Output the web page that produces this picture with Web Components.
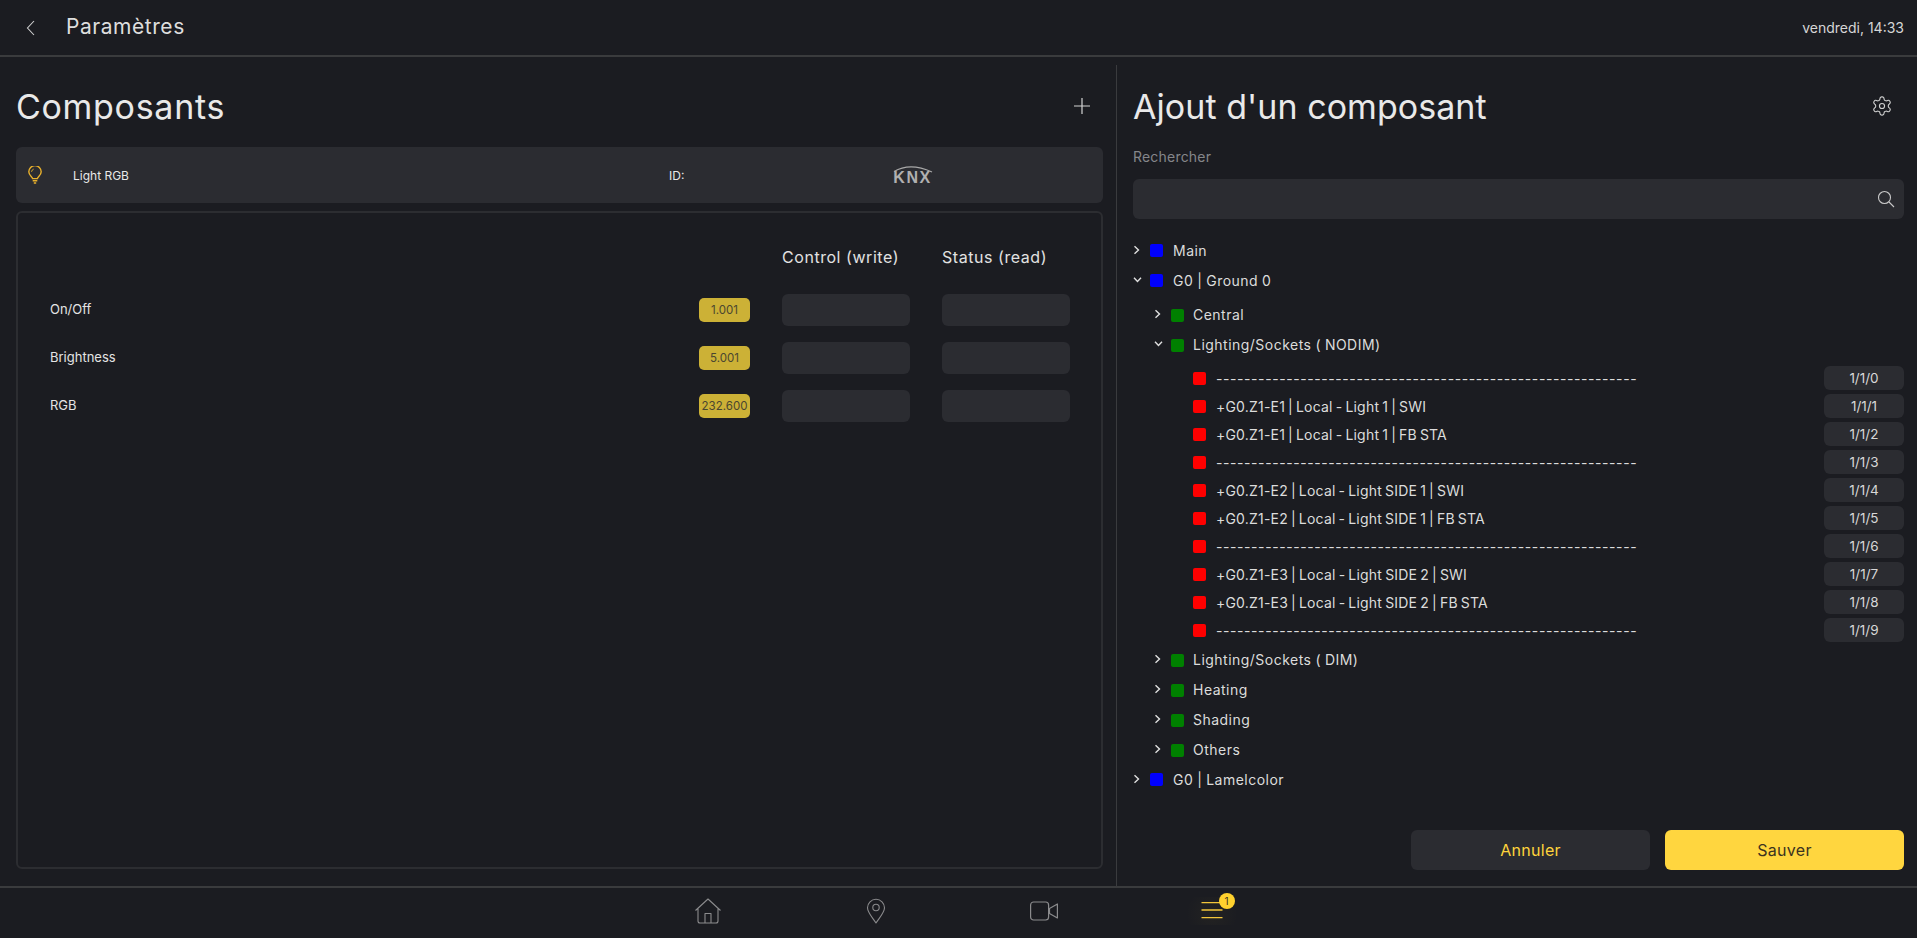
<!doctype html>
<html lang="fr"><head><meta charset="utf-8"><title>Paramètres</title>
<style>
html,body{margin:0;height:100%;background:#1b1c21;}
body{font-family:Inter,"Noto Sans",sans-serif;color:#e6e6e6;overflow:hidden}
</style></head><body>
<app-shell>
  <app-header slot="header" title="Paramètres" time="vendredi, 14:33"></app-header>
  <components-panel slot="left"></components-panel>
  <add-panel slot="right"></add-panel>
  <bottom-nav slot="nav"></bottom-nav>
</app-shell>
<script>
const FONT='Inter,"Noto Sans",sans-serif';
function def(name,html,init){
  customElements.define(name,class extends HTMLElement{
    connectedCallback(){
      if(this.shadowRoot)return;
      const r=this.attachShadow({mode:'open'});
      r.innerHTML=typeof html==='function'?html(this):html;
      if(init)init.call(this,r);
    }
  });
}
const esc=s=>String(s||'').replace(/&/g,'&amp;').replace(/</g,'&lt;');
def('app-shell',`<style>
:host{display:grid;grid-template-rows:57px 1fr 52px;grid-template-columns:1116px 1fr;width:1917px;height:938px;background:#1b1c21;overflow:hidden}
.h{grid-column:1/3}.n{grid-column:1/3}
.r{border-left:1px solid #3a3b3e;margin-top:8px;min-height:0;display:flex}
::slotted(*){min-width:0}
</style>
<div class="h"><slot name="header"></slot></div>
<div class="l"><slot name="left"></slot></div>
<div class="r"><slot name="right"></slot></div>
<div class="n"><slot name="nav"></slot></div>`);
def('app-header',el=>`<style>
:host{display:flex;align-items:center;height:55px;border-bottom:2px solid #3a3b3d;color:#dcdcdc;font-family:${FONT}}
svg{margin-left:26px;width:10px;height:16px;flex:none}
.t{margin-left:30px;font-size:21px;letter-spacing:.55px;line-height:53px;height:55px;color:#dedede}
.d{margin-left:auto;margin-right:13px;font-size:14px;color:#d6d6d6}
</style><svg viewBox="0 0 10 16" fill="none" stroke="#cfcfcf" stroke-width="1.100"><path d="M8 1 1.500 8 8 15"/></svg><span class="t">${esc(el.getAttribute('title'))}</span><span class="d">${esc(el.getAttribute('time'))}</span>`);
def('panel-title',`<style>
:host{display:flex;align-items:center;justify-content:space-between;height:36px;font-family:${FONT};font-size:34px;color:#e9e9e9;font-weight:400}
</style><slot></slot><slot name="action"></slot>`);
def('component-row',`<style>
:host{display:flex;align-items:center;height:56px;border-radius:6px;background:#2b2c31;font-family:${FONT};font-size:12px;color:#e8e8e8}
.ic{width:14px;height:18px;margin-left:12px;flex:none}
.n{margin-left:31px;width:596px;flex:none}
.id{width:223px;flex:none}
.k{display:block;width:41px;position:relative;height:20px;color:#b0b0b0}
.k svg{position:absolute;top:0;left:0;width:41px;height:10px}
.k b{position:absolute;top:4.500px;left:0;width:41px;text-align:center;font:900 16px/15px "Liberation Sans",sans-serif;letter-spacing:1.500px}
</style>
<svg class="ic" viewBox="0 0 14 18" fill="none" stroke="#e8b02c" stroke-width="1.400"><path d="M4.600 12.600c-.2-1.800-3.800-3.100-3.800-6.800a6.200 6.200 0 0 1 12.400 0c0 3.700-3.600 5-3.800 6.800z"/><path d="M4.700 14.800h4.600M5.800 17h2.400"/><path d="M3.500 5.800a3.400 3.400 0 0 1 2.200-2.700" stroke-width=".9"/></svg>
<span class="n">Light RGB</span><span class="id">ID:</span>
<span class="k"><svg viewBox="0 0 41 10" fill="none"><path d="M2 6.500Q18-3 40 7" stroke="#a8a8a8" stroke-width="1.300"/></svg><b>KNX</b></span>`);
def('dpt-row',el=>`<style>
:host{display:grid;grid-template-columns:649px 51px 32px 128px 32px 128px;align-items:center;height:32px;margin-bottom:16px;font-family:${FONT};font-size:13px;color:#e4e4e4}
.lb{padding-bottom:3px}
.c{height:24px;border-radius:5px;background:#ccb136;color:#4a4630;font-size:11.500px;line-height:24px;text-align:center;white-space:nowrap}
.f{height:32px;border-radius:6px;background:#2b2c31}
</style><span class="lb">${esc(el.getAttribute('label'))}</span><span class="c">${esc(el.getAttribute('dpt'))}</span><span></span><span class="f"></span><span></span><span class="f"></span>`);
def('components-panel',`<style>
:host{display:block;padding:0 13px 0 16px;height:100%;box-sizing:border-box;font-family:${FONT}}
panel-title{margin-top:31px;letter-spacing:.7px}
.plus{width:16px;height:16px;margin-right:13px;display:block}
component-row{margin-top:23px}
.box{margin-top:8px;height:658px;box-sizing:border-box;border:2px solid #2c2d31;border-radius:6px;padding:0 0 0 32px}
.head{display:grid;grid-template-columns:732px 160px 1fr;height:34px;margin-top:27px;margin-bottom:20px;font-size:16px;letter-spacing:.55px;line-height:34px;color:#e2e2e2}
</style>
<panel-title>Composants<svg slot="action" class="plus" viewBox="0 0 16 16" stroke="#d4d4d4" stroke-width="1.200"><path d="M8 0v16M0 8h16"/></svg></panel-title>
<component-row></component-row>
<div class="box">
 <div class="head"><span></span><span>Control (write)</span><span>Status (read)</span></div>
 <dpt-row label="On/Off" dpt="1.001"></dpt-row>
 <dpt-row label="Brightness" dpt="5.001"></dpt-row>
 <dpt-row label="RGB" dpt="232.600"></dpt-row>
</div>`);
def('tree-node',el=>{
  const lvl=+el.getAttribute('level')||0, col=['#0000ff','#008000','#ff0000'][lvl];
  const a=el.getAttribute('arrow'), label=el.getAttribute('label')||'';
  const arrow=a==='r'?'<path d="M1.500 1.200 5.500 5 1.500 8.800"/>':a==='d'?'<path d="M1 2.800 4.500 6.500 8 2.800"/>':'';
  const addr=el.getAttribute('addr');
  const spacing=label[0]==='-'?'letter-spacing:.58px':lvl==2?'letter-spacing:.2px;word-spacing:-1.100px':'letter-spacing:.48px;word-spacing:-.5px';
  return `<style>
:host{display:flex;align-items:center;height:${lvl==2?28:30}px;padding-left:${[0,21,43][lvl]}px;font-family:${FONT};font-size:14px;color:#dcdcdc;white-space:nowrap}
svg{width:17px;height:10px;flex:none}
i{width:13px;height:13px;border-radius:2px;background:${col};flex:none;margin-right:${lvl==1?9:10}px;margin-top:${lvl==1?2:1}px}
.l{${spacing}}
.a{margin-left:auto;width:80px;height:24px;border-radius:6px;background:#2b2c31;text-align:center;line-height:24px;font-size:13.500px;color:#d8d8d8}
</style><svg viewBox="0 0 17 10" fill="none" stroke="#e0e0e0" stroke-width="1.400">${arrow}</svg><i></i><span class="l">${esc(label)}</span>${addr?`<span class="a">${esc(addr)}</span>`:''}`;
});
def('action-button',el=>{
 const p=el.hasAttribute('primary');
 return `<style>
:host{display:block;width:239px;height:40px;border-radius:6px;background:${p?'#ffd63f':'#2b2c31'};color:${p?'#3b3320':'#ffd43b'};font-family:${FONT};font-size:16px;letter-spacing:.3px;line-height:40px;text-align:center}
</style><slot></slot>`});
def('add-panel',()=>{
 const dash='-'.repeat(60);
 return `<style>
:host{display:flex;flex-direction:column;box-sizing:border-box;flex:1;padding:23px 13px 16px 16px;font-family:${FONT}}
panel-title{letter-spacing:.05px}
.gear{width:22px;height:22px;margin-right:11px;display:block}
.lab{font-size:14px;letter-spacing:.2px;color:#85868a;margin-top:23px;line-height:20px;margin-bottom:12px}
.search{height:40px;border-radius:6px;background:#2b2c31;display:flex;align-items:center;justify-content:flex-end}
.search svg{width:18px;height:18px;margin-right:9px}
.tree{margin-top:16px;flex:1}
.kids{padding-top:4px}.leafs{padding-top:5px}
.btns{display:flex;justify-content:flex-end;gap:15px}
</style>
<panel-title>Ajout d'un composant<svg slot="action" class="gear" viewBox="0 0 24 24" fill="none" stroke="#d0d0d0" stroke-width="1.200" stroke-linejoin="round"><path d="M12.220 2h-.44a2 2 0 0 0-2 2v.18a2 2 0 0 1-1 1.730l-.43.25a2 2 0 0 1-2 0l-.15-.08a2 2 0 0 0-2.730.73l-.22.38a2 2 0 0 0 .73 2.730l.15.1a2 2 0 0 1 1 1.720v.51a2 2 0 0 1-1 1.740l-.15.09a2 2 0 0 0-.73 2.730l.22.38a2 2 0 0 0 2.730.73l.15-.08a2 2 0 0 1 2 0l.43.25a2 2 0 0 1 1 1.730V20a2 2 0 0 0 2 2h.44a2 2 0 0 0 2-2v-.18a2 2 0 0 1 1-1.730l.43-.25a2 2 0 0 1 2 0l.15.08a2 2 0 0 0 2.730-.73l.22-.39a2 2 0 0 0-.73-2.730l-.15-.08a2 2 0 0 1-1-1.740v-.5a2 2 0 0 1 1-1.740l.15-.09a2 2 0 0 0 .73-2.730l-.22-.38a2 2 0 0 0-2.730-.73l-.15.08a2 2 0 0 1-2 0l-.43-.25a2 2 0 0 1-1-1.730V4a2 2 0 0 0-2-2z"/><circle cx="12" cy="12" r="2.800"/></svg></panel-title>
<div class="lab">Rechercher</div>
<div class="search"><svg viewBox="0 0 18 18" fill="none" stroke="#c9c9c9" stroke-width="1.100"><circle cx="7.500" cy="7.500" r="6"/><path d="M12 12l5 5"/></svg></div>
<div class="tree">
<tree-node arrow="r" label="Main"></tree-node>
<tree-node arrow="d" label="G0 | Ground 0"></tree-node>
<div class="kids">
<tree-node level="1" arrow="r" label="Central"></tree-node>
<tree-node level="1" arrow="d" label="Lighting/Sockets ( NODIM)"></tree-node>
<div class="leafs">
<tree-node level="2" label="${dash}" addr="1/1/0"></tree-node>
<tree-node level="2" label="+G0.Z1-E1 | Local - Light 1 | SWI" addr="1/1/1"></tree-node>
<tree-node level="2" label="+G0.Z1-E1 | Local - Light 1 | FB STA" addr="1/1/2"></tree-node>
<tree-node level="2" label="${dash}" addr="1/1/3"></tree-node>
<tree-node level="2" label="+G0.Z1-E2 | Local - Light SIDE 1 | SWI" addr="1/1/4"></tree-node>
<tree-node level="2" label="+G0.Z1-E2 | Local - Light SIDE 1 | FB STA" addr="1/1/5"></tree-node>
<tree-node level="2" label="${dash}" addr="1/1/6"></tree-node>
<tree-node level="2" label="+G0.Z1-E3 | Local - Light SIDE 2 | SWI" addr="1/1/7"></tree-node>
<tree-node level="2" label="+G0.Z1-E3 | Local - Light SIDE 2 | FB STA" addr="1/1/8"></tree-node>
<tree-node level="2" label="${dash}" addr="1/1/9"></tree-node>
</div>
<tree-node level="1" arrow="r" label="Lighting/Sockets ( DIM)"></tree-node>
<tree-node level="1" arrow="r" label="Heating"></tree-node>
<tree-node level="1" arrow="r" label="Shading"></tree-node>
<tree-node level="1" arrow="r" label="Others"></tree-node>
</div>
<tree-node arrow="r" label="G0 | Lamelcolor"></tree-node>
</div>
<div class="btns"><action-button>Annuler</action-button><action-button primary>Sauver</action-button></div>`});
def('bottom-nav',`<style>
:host{display:flex;justify-content:center;align-items:center;height:52px;box-sizing:border-box;border-top:2px solid #3a3b3d;font-family:${FONT};padding:0 0 4px 3px}
.it{width:168px;display:flex;justify-content:center;position:relative}
svg{display:block;width:28px;height:28px}
.m{background:radial-gradient(circle at 50% 60%,rgba(255,210,60,.035),rgba(255,210,60,0) 26px)}
.b{position:absolute;left:90.500px;top:-4px;width:16px;height:16px;border-radius:8px;background:#ffd12e;color:#3b3320;font-size:10px;line-height:16px;text-align:center}
</style>
<div class="it"><svg viewBox="0 0 28 28" fill="none" stroke="#8b8b8d" stroke-width="1.100" stroke-linejoin="round"><path d="M1.500 13.500 14 2l12.500 11.500M4 11.500V24a2 2 0 0 0 2 2h16a2 2 0 0 0 2-2V11.500M11 26v-9.500h6V26"/></svg></div>
<div class="it"><svg viewBox="0 0 28 28" fill="none" stroke="#8b8b8d" stroke-width="1.100" stroke-linejoin="round"><path d="M14 26C10 20 5.500 15.500 5.500 10.800a8.500 8.500 0 0 1 17 0C22.500 15.500 18 20 14 26z"/><circle cx="14" cy="10.500" r="3.200"/></svg></div>
<div class="it"><svg viewBox="0 0 28 28" fill="none" stroke="#8b8b8d" stroke-width="1.200" stroke-linejoin="round"><rect x=".6" y="5" width="18" height="18" rx="3"/><path d="M19.500 11.500 27.400 7v14l-7.900-4.500z"/></svg></div>
<div class="it m"><svg viewBox="0 0 28 28" fill="none" stroke="#f2c53a" stroke-width="1.300"><path d="M3.500 5.700h21M3.500 13h21M3.500 20.700h21"/></svg><span class="b">1</span></div>`);
</script>
</body></html>
